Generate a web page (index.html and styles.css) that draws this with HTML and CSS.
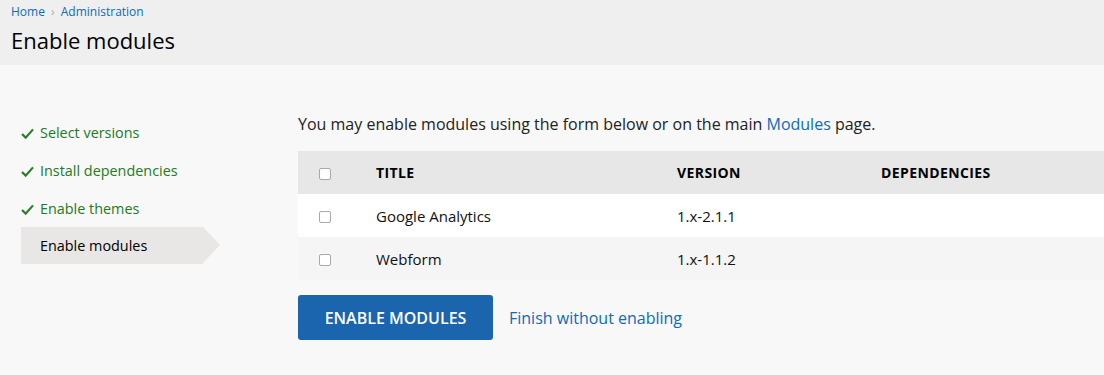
FILE: index.html
```html
<!DOCTYPE html>
<html lang="en">
<head>
    <meta charset="UTF-8" />
    <title>Enable modules</title>
    <link rel="stylesheet" href="styles.css">
</head>
<body>

    <div class="page-header">
        <nav class="breadcrumb">
            <a href="#">Home</a>
            <span class="sep">&rsaquo;</span>
            <a href="#">Administration</a>
        </nav>
        <h1>Enable modules</h1>
    </div>

    <div class="layout">
        <ul class="steps">
            <li class="done">
                <svg viewBox="0 0 14 12" width="13" height="11"><path d="M1 6.5 L5 10.5 L13 1.5" fill="none" stroke="#2b7d25" stroke-width="2.4"/></svg>
                Select versions
            </li>
            <li class="done">
                <svg viewBox="0 0 14 12" width="13" height="11"><path d="M1 6.5 L5 10.5 L13 1.5" fill="none" stroke="#2b7d25" stroke-width="2.4"/></svg>
                Install dependencies
            </li>
            <li class="done">
                <svg viewBox="0 0 14 12" width="13" height="11"><path d="M1 6.5 L5 10.5 L13 1.5" fill="none" stroke="#2b7d25" stroke-width="2.4"/></svg>
                Enable themes
            </li>
            <li class="active">Enable modules</li>
        </ul>

        <div class="main">
            <p class="intro">You may enable modules using the form below or on the main <a href="#">Modules</a> page.</p>

            <table class="modules">
                <thead>
                    <tr>
                        <th class="check"><span class="box"></span></th>
                        <th class="col-title">Title</th>
                        <th class="col-version">Version</th>
                        <th>Dependencies</th>
                    </tr>
                </thead>
                <tbody>
                    <tr>
                        <td class="check"><span class="box"></span></td>
                        <td>Google Analytics</td>
                        <td>1.x-2.1.1</td>
                        <td></td>
                    </tr>
                    <tr class="even">
                        <td class="check"><span class="box"></span></td>
                        <td>Webform</td>
                        <td>1.x-1.1.2</td>
                        <td></td>
                    </tr>
                </tbody>
            </table>

            <div class="actions">
                <button class="primary">Enable modules</button>
                <a href="#">Finish without enabling</a>
            </div>
        </div>
    </div>

</body>
</html>
```

FILE: styles.css
```css
body {
    margin: 0;
    font-family: "Open Sans", sans-serif;
    background: #f8f8f8;
    color: #000;
    overflow: hidden;
}
a {
    color: #0f6bb7;
    text-decoration: none;
}
.page-header {
    background: #efefef;
    height: 65px;
    padding: 0 11px;
    box-sizing: border-box;
}
.breadcrumb {
    font-size: 12px;
    padding-top: 3px;
    line-height: 18px;
}
.breadcrumb .sep {
    color: #aaa;
    margin: 0 3px;
}
h1 {
    font-size: 22px;
    font-weight: normal;
    margin: 4px 0 0;
    line-height: 30px;
}
.layout {
    display: flex;
}
.steps {
    list-style: none;
    margin: 49px 0 0 21px;
    padding: 0;
    width: 277px;
    flex-shrink: 0;
}
.steps li {
    height: 38px;
    line-height: 38px;
    font-size: 14.4px;
    color: #247a1f;
    display: flex;
    align-items: center;
    gap: 6px;
}
.steps li svg {
    margin-top: 1px;
}
.steps li.active {
    color: #000;
    background: #e8e7e6;
    width: 182px;
    height: 37px;
    padding-left: 19px;
    box-sizing: border-box;
    position: relative;
    margin-top: -1px;
}
.steps li.active::after {
    content: "";
    position: absolute;
    left: 182px;
    top: 0;
    border-left: 17px solid #e8e7e6;
    border-top: 18.5px solid transparent;
    border-bottom: 18.5px solid transparent;
}
.main {
    flex: 1;
    padding-top: 48px;
}
.intro {
    margin: 0 0 16px;
    font-size: 16px;
    line-height: 22px;
    color: #222;
}
.modules {
    border-collapse: collapse;
    width: 830px;
    font-size: 15px;
}
.modules th {
    background: #e7e7e7;
    text-transform: uppercase;
    text-align: left;
    font-weight: bold;
    font-size: 14px;
    height: 43px;
    padding: 0;
    letter-spacing: 0.4px;
}
.modules td {
    background: #fff;
    height: 43px;
    padding: 0;
    color: #111;
}
.modules tr.even td {
    background: #f5f5f5;
}
.modules .check {
    width: 78px;
    padding-left: 21px;
    box-sizing: border-box;
}
.modules .col-title {
    width: 301px;
}
.modules .col-version {
    width: 204px;
}
.box {
    display: block;
    width: 10px;
    height: 10px;
    border: 1px solid #a9a9a9;
    border-radius: 2px;
    background: #fff;
    margin-top: 3px;
}
.actions {
    margin-top: 15px;
    display: flex;
    align-items: center;
    gap: 16px;
    font-size: 16px;
}
.primary {
    background: #1b65ae;
    color: #fff;
    border: none;
    border-radius: 3px;
    height: 45px;
    width: 195px;
    font-family: "Open Sans", sans-serif;
    font-size: 16px;
    font-weight: 600;
    text-transform: uppercase;
    cursor: pointer;
}
```
